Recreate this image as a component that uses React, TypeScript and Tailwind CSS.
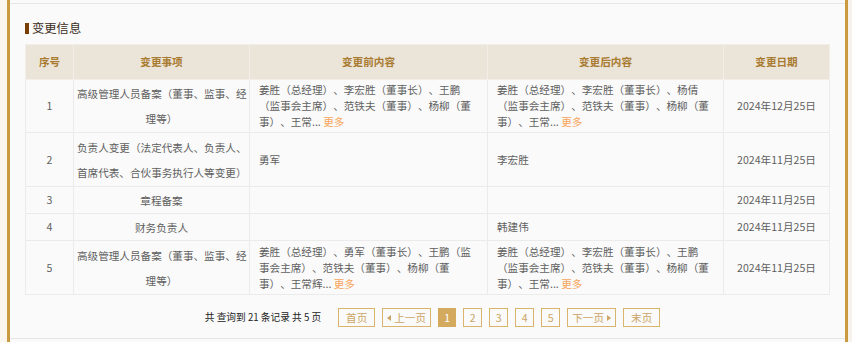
import React from "react";

const FONT = { fontFamily: '"Noto Sans CJK SC", "Noto Sans", sans-serif' };

type Row = {
  no: string;
  item: string[];
  before: string[] | null;
  beforeMore?: boolean;
  after: string[] | null;
  afterMore?: boolean;
  date: string;
  h: string;
};

const rows: Row[] = [
  {
    no: "1",
    item: ["高级管理人员备案（董事、监事、经", "理等）"],
    before: ["姜胜（总经理）、李宏胜（董事长）、王鹏", "（监事会主席）、范铁夫（董事）、杨柳（董", "事）、王常... "],
    beforeMore: true,
    after: ["姜胜（总经理）、李宏胜（董事长）、杨倩", "（监事会主席）、范铁夫（董事）、杨柳（董", "事）、王常... "],
    afterMore: true,
    date: "2024年12月25日",
    h: "h-[53px]",
  },
  {
    no: "2",
    item: ["负责人变更（法定代表人、负责人、", "首席代表、合伙事务执行人等变更）"],
    before: ["勇军"],
    after: ["李宏胜"],
    date: "2024年11月25日",
    h: "h-[54px]",
  },
  {
    no: "3",
    item: ["章程备案"],
    before: null,
    after: null,
    date: "2024年11月25日",
    h: "h-[27px]",
  },
  {
    no: "4",
    item: ["财务负责人"],
    before: null,
    after: ["韩建伟"],
    date: "2024年11月25日",
    h: "h-[27px]",
  },
  {
    no: "5",
    item: ["高级管理人员备案（董事、监事、经", "理等）"],
    before: ["姜胜（总经理）、勇军（董事长）、王鹏（监", "事会主席）、范铁夫（董事）、杨柳（董", "事）、王常辉... "],
    beforeMore: true,
    after: ["姜胜（总经理）、李宏胜（董事长）、王鹏", "（监事会主席）、范铁夫（董事）、杨柳（董", "事）、王常... "],
    afterMore: true,
    date: "2024年11月25日",
    h: "h-[54px]",
  },
];

function Lines({ lines, more }: { lines: string[] | null; more?: boolean }) {
  if (!lines) return null;
  return (
    <div className="leading-[16px] text-left">
      {lines.map((l, i) => (
        <div key={i} className="whitespace-pre">
          {l}
          {more && i === lines.length - 1 ? <span className="text-[#f7a55c]">更多</span> : null}
        </div>
      ))}
    </div>
  );
}

function PageBtn({ children, active, w }: { children: React.ReactNode; active?: boolean; w: string }) {
  return (
    <div
      className={`${w} h-[19px] flex items-center justify-center border text-[10.6px] ${
        active ? "bg-[#d4aa5e] border-[#d4aa5e] text-white" : "border-[#d8b46c] text-[#cba463] bg-[#fafafa]"
      }`}
    >
      {children}
    </div>
  );
}

const TriL = () => (
  <svg width="4" height="6" viewBox="0 0 4 6" className="mr-[3px]">
    <path d="M4 0 L0 3 L4 6 Z" fill="#cba463" />
  </svg>
);
const TriR = () => (
  <svg width="4" height="6" viewBox="0 0 4 6" className="ml-[3px]">
    <path d="M0 0 L4 3 L0 6 Z" fill="#cba463" />
  </svg>
);

export default function App() {
  return (
    <div
      className="w-[852px] h-[342px] flex bg-[#fbf7ee] overflow-hidden [text-spacing-trim:space-all]"
      style={FONT}
    >
      <div className="w-[7px] bg-[#fbf7ee]" />
      <div className="w-[3px] bg-[#c99a3f]" />
      <div className="w-[835px] h-full bg-[#fafafa] flex flex-col">
        <div className="h-[3px]" />
        <div className="border-t border-[#e6e6e6]" />
        <div className="px-[15px]">
          <div className="mt-[16px] h-[16px] flex items-center">
            <div className="w-[4px] h-[11px] bg-[#7b3e05] mt-[1px]" />
            <div className="ml-[3px] text-[12.3px] text-[#3a2c1c] leading-[16px]">变更信息</div>
          </div>
          <table className="mt-[8px] w-[804px] table-fixed border-collapse text-[10.6px]">
            <colgroup>
              <col className="w-[48px]" />
              <col className="w-[176px]" />
              <col className="w-[238px]" />
              <col className="w-[236px]" />
              <col className="w-[106px]" />
            </colgroup>
            <thead>
              <tr className="h-[35px] bg-[#ebe4d9]">
                {["序号", "变更事项", "变更前内容", "变更后内容", "变更日期"].map((t) => (
                  <th
                    key={t}
                    className="border border-[#f3efe8] text-[#a87b30] font-bold text-center p-0"
                  >
                    {t}
                  </th>
                ))}
              </tr>
            </thead>
            <tbody className="text-[#5f5f5f]">
              {rows.map((r) => (
                <tr key={r.no} className={r.h}>
                  <td className="border border-[#ebebeb] text-center p-0">{r.no}</td>
                  <td className="border border-[#ebebeb] text-center px-[3px] py-0">
                    {r.item.map((l, i) => (
                      <div key={i} className="leading-[25px] whitespace-nowrap">
                        {l}
                      </div>
                    ))}
                  </td>
                  <td className="border border-[#ebebeb] pl-[9px] pr-0 py-0">
                    <Lines lines={r.before} more={r.beforeMore} />
                  </td>
                  <td className="border border-[#ebebeb] pl-[9px] pr-0 py-0">
                    <Lines lines={r.after} more={r.afterMore} />
                  </td>
                  <td className="border border-[#ebebeb] text-center p-0">{r.date}</td>
                </tr>
              ))}
            </tbody>
          </table>
          <div className="mt-[13px] h-[19px] flex items-center justify-center pl-[10px]">
            <div className="text-[9.7px] text-[#222] mr-[17px] whitespace-pre">
              共 查询到 21 条记录 共 5 页
            </div>
            <div className="flex gap-[7px]">
              <PageBtn w="w-[37px]">首页</PageBtn>
              <PageBtn w="w-[49px]">
                <TriL />
                上一页
              </PageBtn>
              <PageBtn w="w-[18px]" active>
                1
              </PageBtn>
              <PageBtn w="w-[19px]">2</PageBtn>
              <PageBtn w="w-[19px]">3</PageBtn>
              <PageBtn w="w-[19px]">4</PageBtn>
              <PageBtn w="w-[19px]">5</PageBtn>
              <PageBtn w="w-[49px]">
                下一页
                <TriR />
              </PageBtn>
              <PageBtn w="w-[37px]">末页</PageBtn>
            </div>
          </div>
        </div>
        <div className="flex-1" />
        <div className="border-t border-[#e6e6e6] mb-[3px]" />
      </div>
      <div className="w-[3px] bg-[#c99a3f]" />
      <div className="w-[4px] bg-[#f7f3ec]" />
    </div>
  );
}
